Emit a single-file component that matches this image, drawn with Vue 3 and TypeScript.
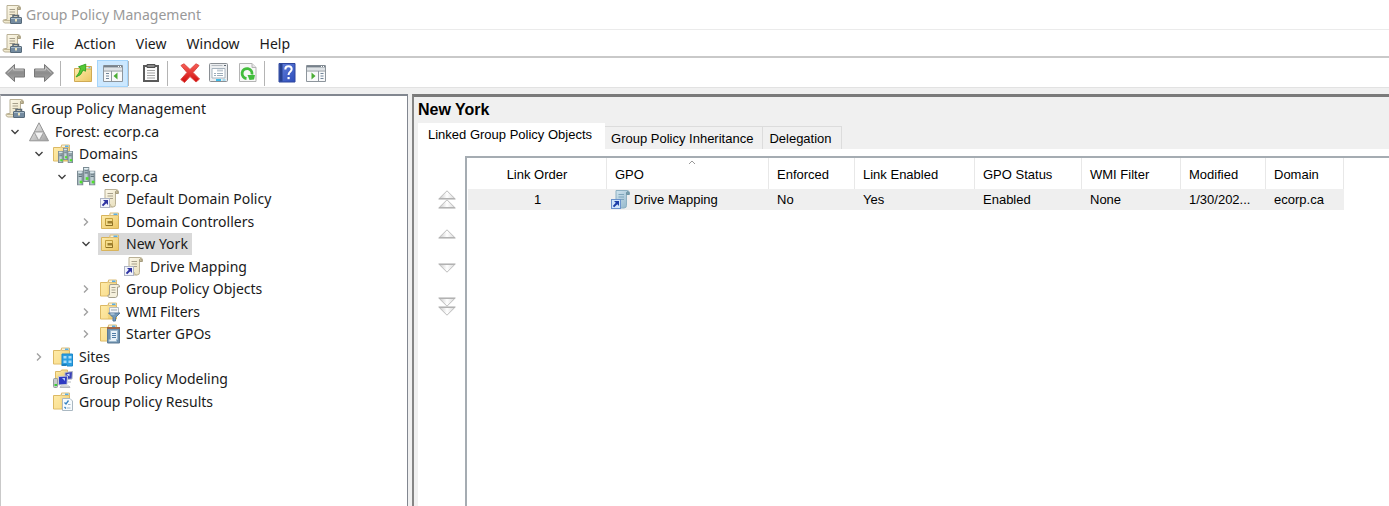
<script setup lang="ts">
import { ref } from 'vue'

interface TreeNode {
  label: string
  icon: string
  level: number
  state: 'open' | 'closed' | 'leaf'
}

interface Tool {
  name: string
  icon: string
  active?: boolean
  divider?: boolean
}

interface Column {
  title: string
  value: string
  key: string
}

const menus: string[] = ['File', 'Action', 'View', 'Window', 'Help']

const tools: Tool[] = [
  { name: 'Back', icon: 'back' },
  { name: 'Forward', icon: 'forward', divider: true },
  { name: 'Up one level', icon: 'up-folder' },
  { name: 'Show console tree', icon: 'tree-pane', active: true, divider: true },
  { name: 'Paste', icon: 'clipboard', divider: true },
  { name: 'Delete', icon: 'delete' },
  { name: 'Properties', icon: 'properties' },
  { name: 'Refresh', icon: 'refresh', divider: true },
  { name: 'Help topics', icon: 'help' },
  { name: 'Show action pane', icon: 'action-pane' },
]

const nodes: TreeNode[] = [
  { label: 'Group Policy Management', icon: 'console', level: 0, state: 'leaf' },
  { label: 'Forest: ecorp.ca', icon: 'forest', level: 1, state: 'open' },
  { label: 'Domains', icon: 'domains', level: 2, state: 'open' },
  { label: 'ecorp.ca', icon: 'servers', level: 3, state: 'open' },
  { label: 'Default Domain Policy', icon: 'gpo-link', level: 4, state: 'leaf' },
  { label: 'Domain Controllers', icon: 'ou', level: 4, state: 'closed' },
  { label: 'New York', icon: 'ou', level: 4, state: 'open' },
  { label: 'Drive Mapping', icon: 'gpo-link', level: 5, state: 'leaf' },
  { label: 'Group Policy Objects', icon: 'gpo-folder', level: 4, state: 'closed' },
  { label: 'WMI Filters', icon: 'wmi', level: 4, state: 'closed' },
  { label: 'Starter GPOs', icon: 'starter', level: 4, state: 'closed' },
  { label: 'Sites', icon: 'sites', level: 2, state: 'closed' },
  { label: 'Group Policy Modeling', icon: 'modeling', level: 2, state: 'leaf' },
  { label: 'Group Policy Results', icon: 'results', level: 2, state: 'leaf' },
]

const tabs: string[] = ['Linked Group Policy Objects', 'Group Policy Inheritance', 'Delegation']

const columns: Column[] = [
  { key: 'order', title: 'Link Order', value: '1' },
  { key: 'gpo', title: 'GPO', value: 'Drive Mapping' },
  { key: 'enforced', title: 'Enforced', value: 'No' },
  { key: 'link', title: 'Link Enabled', value: 'Yes' },
  { key: 'status', title: 'GPO Status', value: 'Enabled' },
  { key: 'wmi', title: 'WMI Filter', value: 'None' },
  { key: 'modified', title: 'Modified', value: '1/30/202...' },
  { key: 'domain', title: 'Domain', value: 'ecorp.ca' },
]

const selected = ref<string>('New York')
const activeTab = ref<string>(tabs[0])
</script>

<template>
  <div class="window">
    <svg class="defs" width="0" height="0" aria-hidden="true">
      <defs>
        <linearGradient id="g-paper" x1="0" y1="0" x2="1" y2="1">
          <stop offset="0" stop-color="#fffcf0" />
          <stop offset="1" stop-color="#e6dcb8" />
        </linearGradient>
        <linearGradient id="g-blue-paper" x1="0" y1="0" x2="1" y2="1">
          <stop offset="0" stop-color="#d8eaf4" />
          <stop offset="1" stop-color="#8fb4c8" />
        </linearGradient>
        <linearGradient id="g-folder" x1="0" y1="0" x2="1" y2="1">
          <stop offset="0" stop-color="#ffeeb0" />
          <stop offset="1" stop-color="#ecc764" />
        </linearGradient>
        <linearGradient id="g-grey" x1="0" y1="0" x2="0" y2="1">
          <stop offset="0" stop-color="#b4b4b4" />
          <stop offset="0.5" stop-color="#8c8c8c" />
          <stop offset="1" stop-color="#a8a8a8" />
        </linearGradient>
        <linearGradient id="g-red" x1="0" y1="0" x2="0" y2="1">
          <stop offset="0" stop-color="#f86058" />
          <stop offset="1" stop-color="#d00c0c" />
        </linearGradient>
        <linearGradient id="g-help" x1="0" y1="0" x2="1" y2="1">
          <stop offset="0" stop-color="#6482dc" />
          <stop offset="1" stop-color="#2c4cba" />
        </linearGradient>
        <linearGradient id="g-tri" x1="0" y1="0" x2="1" y2="1">
          <stop offset="0" stop-color="#f4f4f4" />
          <stop offset="1" stop-color="#a0a0a0" />
        </linearGradient>
        <linearGradient id="g-mover" x1="0" y1="0" x2="1" y2="0">
          <stop offset="0" stop-color="#c8c8c8" />
          <stop offset="0.5" stop-color="#ffffff" />
          <stop offset="1" stop-color="#d8d8d8" />
        </linearGradient>
        <linearGradient id="g-server" x1="0" y1="0" x2="1" y2="0">
          <stop offset="0" stop-color="#a3b4bb" />
          <stop offset="0.5" stop-color="#c6d5da" />
          <stop offset="1" stop-color="#7d9098" />
        </linearGradient>
      </defs>

      <symbol id="scroll" viewBox="0 0 20 20">
        <path d="M5 .5h11.500q2 .5 2 2.500v1.500H15.500v11q0 2.500-2.500 2.500H3q-2-.5-2-2t1.500-1.500H5z" fill="url(#g-paper)" stroke="#b9b095" />
        <path d="M15.500 4.500V2.500q.8-1.500 2-.5.8.8.5 2.500z" fill="#c9bf9c" stroke="#a59c80" />
        <path d="M7.500 4.500h5.500M7.500 7h5.500M7.500 9.500h5.500" stroke="#a7a08c" />
        <path d="M2 15.500h8.500q0 2.500 2 2.500" fill="none" stroke="#c2b896" />
      </symbol>

      <symbol id="console" viewBox="0 0 20 20">
        <use href="#scroll" />
        <path d="M11 12.500v-2h5.500v2" fill="none" stroke="#5b6a76" stroke-width="1.500" />
        <rect x="8.500" y="12.500" width="11" height="6" rx=".5" fill="#748ba0" stroke="#576a7a" />
        <path d="M9 13.500h10" stroke="#a8bcca" />
        <rect x="13" y="14" width="2" height="2.500" fill="#eee6bd" />
      </symbol>

      <symbol id="forest" viewBox="0 0 20 20">
        <path d="M10 .8 14.800 10H5.200zM5.200 10 10 18.800H.5zM14.800 10l4.700 8.800H10z" fill="url(#g-tri)" stroke="#949494" stroke-linejoin="round" />
        <path d="M5.200 10h9.600L10 18.800z" fill="#f2f2f2" stroke="#a4a4a4" stroke-linejoin="round" />
      </symbol>

      <symbol id="folder" viewBox="0 0 20 20">
        <path d="M.5 3.500h7l1-1.500h8v15H.5z" fill="url(#g-folder)" stroke="#dcb964" stroke-linejoin="round" />
        <path d="M8.500 1h8v2.500h-8z" fill="#f9f4e0" stroke="#dcbe78" />
        <path d="M12 1.500h3.500v1.500H12z" fill="#5aaee4" />
        <path d="M1 4h6l1 12.500H1z" fill="#ffe9a4" opacity=".6" />
      </symbol>

      <symbol id="server" viewBox="0 0 6 14" preserveAspectRatio="none">
        <rect x=".5" y=".5" width="5" height="13" fill="url(#g-server)" stroke="#7b8b93" />
        <path d="M1 1.500h4" stroke="#e4f0f4" />
        <path d="M1.500 3.500h3M1.500 5.500h3" stroke="#5f727b" />
        <rect x="2.500" y="9.500" width="2.500" height="2.500" fill="#4fe02c" />
      </symbol>

      <symbol id="domains" viewBox="0 0 20 20">
        <use href="#folder" />
        <use href="#server" x="10" y="4" width="5" height="12" />
        <use href="#server" x="5" y="7" width="5.500" height="12" />
        <use href="#server" x="14.500" y="7" width="5.500" height="12" />
      </symbol>

      <symbol id="servers" viewBox="0 0 20 20">
        <use href="#server" x="7" y="0" width="6.500" height="15" />
        <use href="#server" x="1" y="3.500" width="6.500" height="15" />
        <use href="#server" x="13" y="3.500" width="6.500" height="15" />
      </symbol>

      <symbol id="gpo-link" viewBox="0 0 20 20">
        <use href="#scroll" />
        <rect x=".5" y="9.500" width="9" height="9" fill="#f1f3fb" stroke="#aeb4c4" />
        <path d="M3 11h5v5L6.300 14.300 3.200 17.300 1.800 15.900 4.800 12.800z" fill="#2f34a2" />
      </symbol>

      <symbol id="gpo-link-blue" viewBox="0 0 20 20">
        <path d="M5 .5h11.500q2 .5 2 2.500v1.500H15.500v11q0 2.500-2.500 2.500H3q-2-.5-2-2t1.500-1.500H5z" fill="url(#g-blue-paper)" stroke="#8db0c2" />
        <path d="M15.500 4.500V2.500q.8-1.500 2-.5.8.8.5 2.500z" fill="#7ba0ae" stroke="#6e94a4" />
        <path d="M7.500 4.500h5.500M7.500 7h5.500M7.500 9.500h5.500" stroke="#7fa6bb" />
        <rect x=".5" y="9.500" width="9" height="9" fill="#cfe5fa" stroke="#6a92cc" />
        <path d="M3 11h5v5L6.300 14.300 3.200 17.300 1.800 15.900 4.800 12.800z" fill="#1d3fa8" />
      </symbol>

      <symbol id="ou" viewBox="0 0 20 20">
        <path d="M1.500 3.500h8l1-1.500h8v14.500h-17z" fill="url(#g-folder)" stroke="#d8b45c" stroke-linejoin="round" />
        <path d="M10 1h8.500v2.500H10z" fill="#f9f4e0" stroke="#dcbe78" />
        <path d="M13.500 1.500h4v1.500h-4z" fill="#5aaee4" />
        <path d="M5.500 6.500h7v7h-7z" fill="#f5dc8a" stroke="#c29e3c" />
        <path d="M7.500 9h5v2.500h-5z" fill="#9d7f2e" />
        <path d="M6 13.500h6.500v-3" fill="none" stroke="#8d7024" />
      </symbol>

      <symbol id="gpo-folder" viewBox="0 0 20 20">
        <use href="#folder" />
        <path d="M10 5.500h8q1.800.5 1.500 2.500h-2v8q-.5 2.500-2 2.500H9q-1.500-.5-1-2.500h1.500V7z" fill="#f5f0dc" stroke="#a5a08c" />
        <path d="M11.500 8.500h4M11.500 11h4M11.500 13.500h4" stroke="#aaa592" />
      </symbol>

      <symbol id="wmi" viewBox="0 0 20 20">
        <use href="#folder" />
        <path d="M9.500 5.500h9v6h-9z" fill="#f4f6f8" stroke="#b4bcc2" />
        <path d="M11 8h6" stroke="#9aa6b0" />
        <path d="M8.500 11h11.500l-4.500 4.500v3.500h-2.500v-3.500z" fill="#7399b8" stroke="#56799a" stroke-linejoin="round" />
        <path d="M10.500 12h4" stroke="#cfe0ee" />
      </symbol>

      <symbol id="starter" viewBox="0 0 20 20">
        <use href="#folder" />
        <path d="M7.500 4.500h12v14.500h-12z" fill="#6c90b0" stroke="#5c7a94" />
        <path d="M7 4h13" stroke="#a06648" stroke-width="2" />
        <path d="M10.500 6.500h7v9h-1v2H9v-2h1.500z" fill="#e9f2f9" stroke="#9db8cc" />
        <path d="M12 9.500h4M12 11.500h4M12 13.500h4" stroke="#4f7ba4" />
      </symbol>

      <symbol id="sites" viewBox="0 0 20 20">
        <use href="#folder" />
        <path d="M9 7h10.500v12H14v-1.500H9z" fill="#2b9fe0" stroke="#1c88cc" />
        <path d="M10.500 9h3v2.500h-3zM15.500 9h3v2.500h-3zM10.500 13.500h3V16h-3zM15.500 13.500h3V16h-3z" fill="#a5dcfa" />
        <path d="M8.500 18h5" stroke="#1c80bd" stroke-width="2" />
      </symbol>

      <symbol id="modeling" viewBox="0 0 20 20">
        <path d="M2.500 2.500h5l1-1.500h6v9h-12z" fill="url(#g-folder)" stroke="#dcb964" />
        <path d="M12 3.500 19.500 2.500 19 10l-7 .5z" fill="#3a42b8" stroke="#b5bac4" />
        <path d="M13.500 5.500l3-1v3z" fill="#d5e2ff" />
        <path d="M5.500 7.500 14.500 7l-.5 8.500-8.500.5z" fill="#2e3ac2" stroke="#c9cdd5" />
        <path d="M9 9h3v3z" fill="#b5c9ff" />
        <rect x=".5" y="9.500" width="4" height="9" rx="1" fill="#c5caca" stroke="#959b9d" />
        <path d="M1.500 16h2.500" stroke="#3bcd37" stroke-width="2" />
        <path d="M8 17h8l1 1.500H7zM15 13h3" fill="#e5e7e9" stroke="#b5b9be" />
      </symbol>

      <symbol id="results" viewBox="0 0 20 20">
        <use href="#folder" />
        <path d="M9.500 6.500h7.500l2.500 2.500v9.500h-10z" fill="#f7fbfe" stroke="#aab8c2" />
        <path d="M11.500 10.500l1.500 1.500 2.500-3.500M11.500 15l1.500 1.500" fill="none" stroke="#3683c0" stroke-width="1.300" />
        <path d="M15 12.500h2.500M14 16h3.500" stroke="#a4b7c4" />
      </symbol>

      <symbol id="back" viewBox="0 0 20 20">
        <path d="M.5 10 9.500 1.500V6h10v8h-10v4.500z" fill="url(#g-grey)" stroke="#787878" stroke-linejoin="round" />
        <path d="M2.500 10 8.500 4.500V7h10" fill="none" stroke="#c4c4c4" />
      </symbol>
      <symbol id="forward" viewBox="0 0 20 20">
        <path d="M19.500 10 10.500 1.500V6H.5v8h10v4.500z" fill="url(#g-grey)" stroke="#787878" stroke-linejoin="round" />
        <path d="M1.500 7h10V4.500l6 5.500" fill="none" stroke="#c4c4c4" />
      </symbol>
      <symbol id="up-folder" viewBox="0 0 20 20">
        <path d="M1.500 5.500h8.500l1-1.500h7.500v14.500h-17z" fill="url(#g-folder)" stroke="#d0aa54" stroke-linejoin="round" />
        <path d="M12 3.500h6.500v2.500H12z" fill="#f9f2d8" stroke="#d2ac52" />
        <path d="M15.500 4.700h2" stroke="#4aa6e0" />
        <path d="M3 14Q8.500 12.500 10 7l2.500 1.200L12.800 1.200 5.500 3.800 7.600 5.200Q6.500 10.500 3 14z" fill="#55c935" stroke="#3aa828" stroke-linejoin="round" />
      </symbol>
      <symbol id="tree-pane" viewBox="0 0 20 20">
        <path d="M.5 2.500h19v16H.5z" fill="#f8f9fa" stroke="#8d959c" />
        <path d="M1 3.500h18" stroke="#76818b" stroke-width="2" />
        <path d="M1 6h18" stroke="#c4ccd2" />
        <path d="M8.500 8v10M1 8h18" stroke="#8e979e" />
        <path d="M3 10.500h3M3 13h3M3 15.500h3" stroke="#72869a" />
        <path d="M14.500 9.500v7L10.500 13z" fill="#4aad34" />
        <path d="M15 3.500h1M17 3.500h1" stroke="#fff" />
      </symbol>
      <symbol id="action-pane" viewBox="0 0 20 20">
        <path d="M.5 2.500h19v16H.5z" fill="#f8f9fa" stroke="#8d959c" />
        <path d="M1 3.500h18" stroke="#76818b" stroke-width="2" />
        <path d="M1 6h18" stroke="#c4ccd2" />
        <path d="M12.500 8v10M1 8h18" stroke="#8e979e" />
        <path d="M14.500 10.500h3M14.500 13h3M14.500 15.500h3" stroke="#72869a" />
        <path d="M5.500 9.500v7l4-3.500z" fill="#4aad34" />
        <path d="M15 3.500h1M17 3.500h1" stroke="#fff" />
      </symbol>
      <symbol id="clipboard" viewBox="0 0 20 20">
        <path d="M3 3h14v15H3z" fill="#fcfcfc" stroke="#5a5a5a" stroke-width="2" />
        <path d="M6 1.500h8v3H6z" fill="#8a8a8a" stroke="#505050" />
        <path d="M6 7.500h8M6 10h8M6 12.500h8M6 15h8" stroke="#a4a4a4" />
      </symbol>
      <symbol id="delete" viewBox="0 0 20 20">
        <path d="M1 2.500 4 .8l6 5.700L16 .8l3 1.700-6 7 6.500 6.500-3.500 3-6-5.500-5.500 6L.8 16.500 7 9.500z" fill="url(#g-red)" stroke="#dc4a44" stroke-linejoin="round" />
      </symbol>
      <symbol id="properties" viewBox="0 0 20 20">
        <rect x=".5" y=".5" width="18" height="18" rx="1" fill="#eceef0" stroke="#8a8f94" />
        <path d="M2.500 2.500h11" stroke="#b4bac0" />
        <path d="M15 2.500h2" stroke="#5c6670" />
        <path d="M3 5.500h13v9.500H3z" fill="#fff" stroke="#a6b3be" />
        <path d="M8 7.500h6" stroke="#c3ccd4" stroke-width="2" />
        <path d="M5 10.500h2M8 10.500h6M5 12.500h2M8 12.500h6" stroke="#9dadba" />
        <path d="M7 17h5" stroke="#3ebbe8" stroke-width="2" />
        <path d="M13.500 17h3" stroke="#a8dcf0" stroke-width="2" />
      </symbol>
      <symbol id="refresh" viewBox="0 0 20 20">
        <path d="M1.500.5h12.500l4 4v14H1.500z" fill="#f7f7f7" stroke="#b4b4b4" />
        <path d="M14 .5v4h4" fill="#e5e5e5" stroke="#b4b4b4" />
        <path d="M8.500 15.500A5 5 0 1 1 14 11.500" fill="none" stroke="#42bd3c" stroke-width="2.800" />
        <path d="M9.500 12h7.500l-1 4.500-4.500.5z" fill="#42bd3c" />
      </symbol>
      <symbol id="help" viewBox="0 0 20 20">
        <path d="M2 .5h16v18.500H2z" fill="url(#g-help)" stroke="#2e469e" />
        <path d="M2.500 1h3v17.500h-3z" fill="#27418f" />
        <path d="M8.300 6.500q0-3.200 3.200-3.200t3.200 2.800q0 1.500-1.500 2.700T11.500 12" fill="none" stroke="#fff" stroke-width="2" />
        <rect x="10.500" y="14" width="2.200" height="2.200" fill="#fff" />
      </symbol>

      <symbol id="tri-up" viewBox="0 0 18 10">
        <path d="M9 .8l7.800 7.700H1.200z" fill="url(#g-mover)" stroke="#bcbcbc" />
        <path d="M.5 9h17" stroke="#a8a8a8" />
      </symbol>
      <symbol id="tri-down" viewBox="0 0 18 10">
        <path d="M9 9.200L1.200 1.500h15.600z" fill="url(#g-mover)" stroke="#bcbcbc" />
        <path d="M.5 1h17" stroke="#a8a8a8" />
      </symbol>
    </svg>

    <header class="titlebar">
      <svg class="icon"><use href="#console" /></svg>
      <h1>Group Policy Management</h1>
    </header>

    <nav class="menubar">
      <svg class="icon"><use href="#console" /></svg>
      <button v-for="m in menus" :key="m" type="button">{{ m }}</button>
    </nav>

    <div class="toolbar" role="toolbar">
      <template v-for="t in tools" :key="t.icon">
        <button type="button" class="tool" :class="{ active: t.active }" :aria-label="t.name">
          <svg class="icon"><use :href="'#' + t.icon" /></svg>
        </button>
        <span v-if="t.divider" class="divider"></span>
      </template>
    </div>

    <main class="panes">
      <ul class="tree" role="tree">
        <li
          v-for="(n, i) in nodes"
          :key="i"
          role="treeitem"
          :aria-selected="selected === n.label"
          :class="'level-' + n.level"
        >
          <button v-if="n.state !== 'leaf'" type="button" class="twisty" :class="n.state" :aria-label="'Toggle ' + n.label">
            <svg width="10" height="10" viewBox="0 0 10 10">
              <path v-if="n.state === 'open'" d="M1.500 3 5 6.500 8.500 3" />
              <path v-else d="M3 1.500 6.500 5 3 8.500" />
            </svg>
          </button>
          <span v-else-if="n.level > 0" class="twisty"></span>
          <button type="button" class="node" :class="{ selected: selected === n.label }" @click="selected = n.label">
            <svg class="icon"><use :href="'#' + n.icon" /></svg>
            <span>{{ n.label }}</span>
          </button>
        </li>
      </ul>

      <section class="details">
        <h2>New York</h2>
        <div class="tabs" role="tablist">
          <button
            v-for="t in tabs"
            :key="t"
            type="button"
            role="tab"
            :aria-selected="activeTab === t"
            :class="{ current: activeTab === t }"
            @click="activeTab = t"
          >{{ t }}</button>
        </div>
        <div class="panel">
          <div class="movers">
            <button type="button" aria-label="Move to top">
              <svg width="18" height="20" viewBox="0 0 18 20">
                <use href="#tri-up" width="18" height="10" />
                <use href="#tri-up" y="9" width="18" height="10" />
              </svg>
            </button>
            <button type="button" aria-label="Move up">
              <svg width="18" height="10"><use href="#tri-up" /></svg>
            </button>
            <button type="button" aria-label="Move down">
              <svg width="18" height="10"><use href="#tri-down" /></svg>
            </button>
            <button type="button" aria-label="Move to bottom">
              <svg width="18" height="20" viewBox="0 0 18 20">
                <use href="#tri-down" width="18" height="10" />
                <use href="#tri-down" y="9" width="18" height="10" />
              </svg>
            </button>
          </div>
          <div class="list">
            <table>
              <colgroup>
                <col v-for="c in columns" :key="c.key" :class="'col-' + c.key" />
              </colgroup>
              <thead>
                <tr>
                  <th v-for="c in columns" :key="c.key" scope="col" :class="'cell-' + c.key">
                    <svg v-if="c.key === 'gpo'" class="sort" width="8" height="5" viewBox="0 0 8 5"><path d="M1 4l3-3 3 3" /></svg>
                    {{ c.title }}
                  </th>
                </tr>
              </thead>
              <tbody>
                <tr>
                  <td v-for="c in columns" :key="c.key" :class="'cell-' + c.key">
                    <span v-if="c.key === 'gpo'" class="with-icon">
                      <svg class="icon"><use href="#gpo-link-blue" /></svg>{{ c.value }}
                    </span>
                    <template v-else>{{ c.value }}</template>
                  </td>
                </tr>
              </tbody>
            </table>
          </div>
        </div>
      </section>
    </main>
  </div>
</template>

<style>
body {
  background: #fff;
}
</style>

<style scoped>
.window {
  box-sizing: border-box;
  min-height: 100vh;
  display: flex;
  flex-direction: column;
  font: 14px/20px "Noto Sans", "Open Sans", sans-serif;
  color: #1a1a1a;
}
.window *,
.window *::before {
  box-sizing: border-box;
}
.defs {
  position: absolute;
}
button {
  margin: 0;
  padding: 0;
  border: 0;
  background: none;
  font: inherit;
  color: inherit;
}
.icon {
  width: 20px;
  height: 20px;
  flex: none;
  display: block;
}
.titlebar {
  display: flex;
  align-items: center;
  gap: 4px;
  height: 30px;
  padding-left: 2px;
  border-bottom: 1px solid #ebebeb;
}
.titlebar h1 {
  margin: 0;
  font: inherit;
  color: #999;
}
.menubar {
  display: flex;
  align-items: center;
  height: 28px;
  padding: 2px 0 0 2px;
  border-bottom: 2px solid #c9c9c9;
}
.menubar button {
  padding: 0 10px;
}
.toolbar {
  display: flex;
  align-items: center;
  height: 30px;
  padding-top: 1px;
  border-bottom: 1px solid #e2e2e2;
}
.tool {
  width: 29px;
  height: 27px;
  display: flex;
  align-items: center;
  justify-content: center;
}
.tool.active {
  width: 31px;
  background: #cce8ff;
  border: 1px solid #a5d5fb;
}
.divider {
  width: 1px;
  height: 25px;
  margin: 0 7px 0 2px;
  background: #b4b4b4;
}
.tool.active + .divider {
  margin: 0 7px 0 0;
}
.panes {
  flex: 1;
  display: flex;
  gap: 4px;
  padding-top: 6px;
  background: #f0f0f0;
}
.tree {
  flex: none;
  width: 408px;
  margin: 0;
  padding: 2px 0 0 4px;
  list-style: none;
  background: #fff;
  border: 1px solid #828790;
  border-width: 2px 1px 0;
  border-left-color: #c9c9c9;
}
.tree li {
  display: flex;
  align-items: center;
  height: 22px;
}
.tree li:nth-child(even) {
  height: 23px;
}
.level-2 {
  padding-left: 24px;
}
.level-3 {
  padding-left: 47px;
}
.level-4 {
  padding-left: 71px;
}
.level-5 {
  padding-left: 95px;
}
.twisty {
  width: 20px;
  height: 20px;
  margin-right: 2px;
  display: flex;
  align-items: center;
  justify-content: center;
}
.twisty path {
  fill: none;
  stroke: #a0a0a0;
  stroke-width: 1.4px;
}
.twisty.open path {
  stroke: #404040;
}
.node {
  display: flex;
  align-items: center;
  gap: 6px;
  height: 22px;
  padding: 0 4px 0 2px;
}
.level-0 .node {
  padding-left: 0;
}
.node.selected {
  background: #d9d9d9;
}
.details {
  flex: 1;
  min-width: 0;
  display: flex;
  flex-direction: column;
  padding-left: 4px;
  border-top: 3px double #7a7a7a;
  border-left: 2px solid #858585;
  border-top-style: solid;
  font: 13px/16px "Liberation Sans", Arial, sans-serif;
  color: #000;
}
.details h2 {
  margin: 0;
  padding: 4px 0;
  font: bold 16px/18px "Liberation Sans", Arial, sans-serif;
}
.tabs {
  display: flex;
  align-items: flex-end;
}
.tabs button {
  height: 23px;
  padding: 1px 9px 0 6px;
  border: 1px solid #dcdcdc;
  border-left-width: 0;
  border-bottom: 0;
}
.tabs .current {
  height: 26px;
  padding: 0 12px 3px 10px;
  background: #fff;
  border-color: #fff;
}
.panel {
  flex: 1;
  display: flex;
  background: #fff;
  padding-top: 7px;
}
.movers {
  width: 47px;
  flex: none;
  padding: 34px 0 0 20px;
  display: flex;
  flex-direction: column;
  gap: 24px;
}
.movers button,
.movers svg {
  display: block;
  width: 18px;
}
.movers button:first-child {
  margin-bottom: -5px;
}
.list {
  flex: 1;
  min-width: 0;
  padding-left: 1px;
  border-top: 2px solid #a5acb2;
  border-left: 2px solid #a5acb2;
}
table {
  width: 876px;
  table-layout: fixed;
  border-collapse: separate;
  border-spacing: 0;
}
.col-order { width: 139px; }
.col-gpo { width: 162px; }
.col-enforced { width: 86px; }
.col-link { width: 120px; }
.col-status { width: 107px; }
.col-wmi { width: 99px; }
.col-modified { width: 85px; }
.col-domain { width: 78px; }
th,
td {
  padding: 2px 0 0 8px;
  text-align: left;
  font-weight: normal;
  white-space: nowrap;
}
th {
  position: relative;
  height: 31px;
  border-right: 1px solid #e8e8e8;
}
td {
  height: 21px;
  padding-top: 0;
  background: #efefef;
}
.cell-order {
  padding-left: 0;
  text-align: center;
}
.sort {
  position: absolute;
  top: 2px;
  left: 50%;
  fill: none;
  stroke: #999;
}
td.cell-gpo {
  padding-left: 4px;
}
.with-icon {
  display: flex;
  align-items: center;
  gap: 3px;
}
</style>
